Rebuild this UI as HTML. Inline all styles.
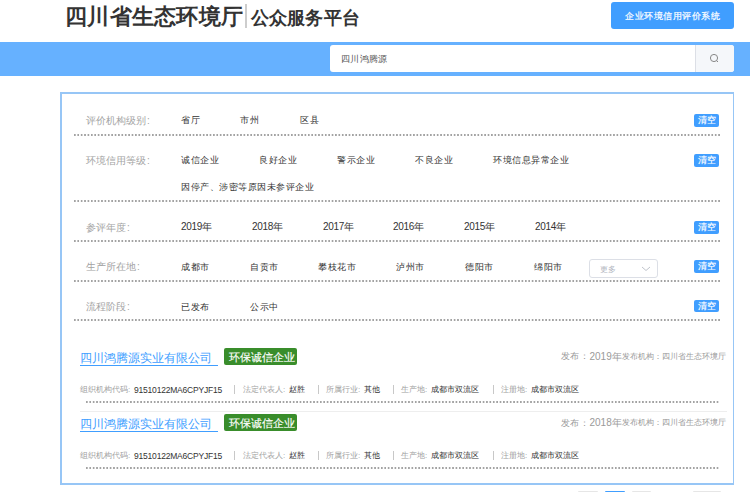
<!DOCTYPE html>
<html><head><meta charset="utf-8">
<style>
*{margin:0;padding:0;box-sizing:border-box}
html,body{width:750px;height:492px;overflow:hidden;background:#fff;font-family:"Liberation Sans",sans-serif;color:#333}
.a{position:absolute;white-space:nowrap}
.dot{height:2px;background-image:linear-gradient(to right,#a3a3a3 0,#a3a3a3 50%,transparent 50%);background-size:3.4px 2px}
.lab{font-size:10px;line-height:12px;color:#a3a3a3}
.it{font-size:9px;letter-spacing:0.5px;line-height:12px;color:#333}
.clr{width:25px;height:12.5px;background:#409eff;border-radius:2px;color:#fff;font-size:9px;letter-spacing:-0.5px;line-height:13px;text-align:center;-webkit-text-stroke:0.15px #fff}
.cname{font-size:12px;letter-spacing:0px;line-height:12.5px;color:#409eff;border-bottom:1px solid #409eff;padding-right:6px;padding-bottom:1px}
.badge{height:16.6px;width:73px;background:#398d2b;border-radius:2px;color:#fff;font-size:11px;line-height:19px;padding:0 0 0 4.6px;-webkit-text-stroke:0.15px #fff}
.pub{color:#9a9a9a}
.info{font-size:8px;line-height:10px;color:#a0a0a0}
.val{font-size:8px;line-height:10px;color:#333}
.code{font-size:8.5px;letter-spacing:-0.2px}
.yr{font-size:10px;letter-spacing:-0.35px}
.sep{font-size:8px;line-height:10px;color:#aaa}
</style></head><body>
<div class="a" style="left:65px;top:3.5px;font-size:22px;line-height:26px;letter-spacing:0.3px;font-weight:bold;color:#333">四川省生态环境厅</div>
<div class="a" style="left:245px;top:4px;width:2px;height:23.5px;background:#cdcdcd"></div>
<div class="a" style="left:250.5px;top:7px;font-size:18px;line-height:22px;letter-spacing:0.3px;font-weight:bold;color:#333">公众服务平台</div>
<div class="a" style="left:611.3px;top:2px;width:123px;height:26.8px;background:#409eff;border-radius:3px;color:#fff;font-size:9px;letter-spacing:0.5px;line-height:28px;text-align:center;-webkit-text-stroke:0.2px #fff">企业环境信用评价系统</div>
<div class="a" style="left:0;top:42px;width:750px;height:33.6px;background:#66b1ff"></div>
<div class="a" style="left:330px;top:45.2px;width:404px;height:26.6px;background:#fff;border-radius:3px"></div>
<div class="a" style="left:340.8px;top:53.2px;font-size:9px;letter-spacing:0.4px;line-height:12px;color:#555">四川鸿腾源</div>
<div class="a" style="left:695px;top:45.2px;width:39px;height:26.6px;background:#f5f7fa;border-left:1px solid #dcdfe6;border-radius:0 3px 3px 0"></div>
<svg class="a" style="left:709px;top:53px" width="11" height="11" viewBox="0 0 11 11"><circle cx="5" cy="5" r="3.6" fill="none" stroke="#888" stroke-width="1"/><line x1="7.6" y1="7.6" x2="9" y2="9" stroke="#888" stroke-width="1"/></svg>
<div class="a" style="left:60px;top:92px;width:674px;height:392.5px;border:2px solid #97c6f6;border-right-width:1px"></div>
<div class="a lab" style="left:86px;top:114.7px">评价机构级别<span style="margin-left:1px">:</span></div>
<div class="a it" style="left:181px;top:114px">省厅</div>
<div class="a it" style="left:240px;top:114px">市州</div>
<div class="a it" style="left:300px;top:114px">区县</div>
<div class="a clr" style="left:694px;top:114px">清空</div>
<div class="a dot" style="left:74px;top:133.5px;width:646px"></div>
<div class="a lab" style="left:86px;top:154.7px">环境信用等级<span style="margin-left:1px">:</span></div>
<div class="a it" style="left:181px;top:154px">诚信企业</div>
<div class="a it" style="left:259px;top:154px">良好企业</div>
<div class="a it" style="left:337px;top:154px">警示企业</div>
<div class="a it" style="left:415px;top:154px">不良企业</div>
<div class="a it" style="left:493px;top:154px">环境信息异常企业</div>
<div class="a clr" style="left:694px;top:154px">清空</div>
<div class="a dot" style="left:74px;top:200px;width:646px"></div>
<div class="a it" style="left:181px;top:181px">因停产、涉密等原因未参评企业</div>
<div class="a lab" style="left:86px;top:221.7px">参评年度<span style="margin-left:1px">:</span></div>
<div class="a it" style="left:181px;top:221px"><span class="yr">2019</span><span style="font-size:9.6px;letter-spacing:0">年</span></div>
<div class="a it" style="left:252px;top:221px"><span class="yr">2018</span><span style="font-size:9.6px;letter-spacing:0">年</span></div>
<div class="a it" style="left:323px;top:221px"><span class="yr">2017</span><span style="font-size:9.6px;letter-spacing:0">年</span></div>
<div class="a it" style="left:393px;top:221px"><span class="yr">2016</span><span style="font-size:9.6px;letter-spacing:0">年</span></div>
<div class="a it" style="left:464px;top:221px"><span class="yr">2015</span><span style="font-size:9.6px;letter-spacing:0">年</span></div>
<div class="a it" style="left:535px;top:221px"><span class="yr">2014</span><span style="font-size:9.6px;letter-spacing:0">年</span></div>
<div class="a clr" style="left:694px;top:221px">清空</div>
<div class="a dot" style="left:74px;top:240px;width:646px"></div>
<div class="a lab" style="left:86px;top:261.3px">生产所在地<span style="margin-left:1px">:</span></div>
<div class="a it" style="left:181px;top:260.6px">成都市</div>
<div class="a it" style="left:250px;top:260.6px">自贡市</div>
<div class="a it" style="left:318px;top:260.6px">攀枝花市</div>
<div class="a it" style="left:396px;top:260.6px">泸州市</div>
<div class="a it" style="left:465px;top:260.6px">德阳市</div>
<div class="a it" style="left:534px;top:260.6px">绵阳市</div>
<div class="a clr" style="left:694px;top:260px">清空</div>
<div class="a dot" style="left:74px;top:279.5px;width:646px"></div>
<div class="a" style="left:589px;top:259px;width:69px;height:19px;border:1px solid #dcdfe6;border-radius:3px"></div>
<div class="a" style="left:600px;top:263.6px;font-size:8px;letter-spacing:0.3px;line-height:12px;color:#b3b7bf">更多</div>
<svg class="a" style="left:641px;top:266px" width="10" height="6" viewBox="0 0 10 6"><polyline points="1,1 5,4.5 9,1" fill="none" stroke="#c0c4cc" stroke-width="1"/></svg>
<div class="a lab" style="left:86px;top:301.3px">流程阶段<span style="margin-left:1px">:</span></div>
<div class="a it" style="left:181px;top:300.6px">已发布</div>
<div class="a it" style="left:250px;top:300.6px">公示中</div>
<div class="a clr" style="left:694px;top:299.5px">清空</div>
<div class="a dot" style="left:74px;top:319px;width:646px"></div>
<div class="a cname" style="left:80px;top:351.5px">四川鸿腾源实业有限公司</div>
<div class="a badge" style="left:224px;top:348.3px">环保诚信企业</div>
<div class="a pub" style="left:561px;top:350.4px;font-size:9px;line-height:12px">发布</div>
<div class="a pub" style="left:580px;top:350.4px;font-size:9px;line-height:12px">：</div>
<div class="a pub" style="left:589.5px;top:350.8px;font-size:10px;line-height:12px">2019年</div>
<div class="a pub" style="left:621.5px;top:351.8px;font-size:8px;line-height:10px">发布机构</div>
<div class="a pub" style="left:654px;top:351.8px;font-size:8px;line-height:10px">：</div>
<div class="a pub" style="left:662px;top:351.8px;font-size:8px;line-height:10px">四川省生态环境厅</div>
<div class="a info" style="left:80px;top:384.5px">组织机构代码:</div>
<div class="a val code" style="left:134px;top:384.5px">91510122MA6CPYJF15</div>
<div class="a info" style="left:243px;top:384.5px">法定代表人:</div>
<div class="a val" style="left:289px;top:384.5px">赵胜</div>
<div class="a info" style="left:326px;top:384.5px">所属行业:</div>
<div class="a val" style="left:364px;top:384.5px">其他</div>
<div class="a info" style="left:401px;top:384.5px">生产地:</div>
<div class="a val" style="left:430.5px;top:384.5px">成都市双流区</div>
<div class="a info" style="left:501px;top:384.5px">注册地:</div>
<div class="a val" style="left:530.5px;top:384.5px">成都市双流区</div>
<div class="a" style="left:234px;top:384.5px;width:1px;height:9px;background:#c8c8c8"></div>
<div class="a" style="left:317.5px;top:384.5px;width:1px;height:9px;background:#c8c8c8"></div>
<div class="a" style="left:392.5px;top:384.5px;width:1px;height:9px;background:#c8c8c8"></div>
<div class="a" style="left:492.5px;top:384.5px;width:1px;height:9px;background:#c8c8c8"></div>
<div class="a dot" style="left:86px;top:400.6px;width:634px"></div>
<div class="a" style="left:80px;top:411px;width:647px;height:1px;background:#eee"></div>
<div class="a cname" style="left:80px;top:417.5px">四川鸿腾源实业有限公司</div>
<div class="a badge" style="left:224px;top:414.3px">环保诚信企业</div>
<div class="a pub" style="left:561px;top:416.79999999999995px;font-size:9px;line-height:12px">发布</div>
<div class="a pub" style="left:580px;top:416.79999999999995px;font-size:9px;line-height:12px">：</div>
<div class="a pub" style="left:589.5px;top:417.2px;font-size:10px;line-height:12px">2018年</div>
<div class="a pub" style="left:621.5px;top:418.2px;font-size:8px;line-height:10px">发布机构</div>
<div class="a pub" style="left:654px;top:418.2px;font-size:8px;line-height:10px">：</div>
<div class="a pub" style="left:662px;top:418.2px;font-size:8px;line-height:10px">四川省生态环境厅</div>
<div class="a info" style="left:80px;top:450.5px">组织机构代码:</div>
<div class="a val code" style="left:134px;top:450.5px">91510122MA6CPYJF15</div>
<div class="a info" style="left:243px;top:450.5px">法定代表人:</div>
<div class="a val" style="left:289px;top:450.5px">赵胜</div>
<div class="a info" style="left:326px;top:450.5px">所属行业:</div>
<div class="a val" style="left:364px;top:450.5px">其他</div>
<div class="a info" style="left:401px;top:450.5px">生产地:</div>
<div class="a val" style="left:430.5px;top:450.5px">成都市双流区</div>
<div class="a info" style="left:501px;top:450.5px">注册地:</div>
<div class="a val" style="left:530.5px;top:450.5px">成都市双流区</div>
<div class="a" style="left:234px;top:450.5px;width:1px;height:9px;background:#c8c8c8"></div>
<div class="a" style="left:317.5px;top:450.5px;width:1px;height:9px;background:#c8c8c8"></div>
<div class="a" style="left:392.5px;top:450.5px;width:1px;height:9px;background:#c8c8c8"></div>
<div class="a" style="left:492.5px;top:450.5px;width:1px;height:9px;background:#c8c8c8"></div>
<div class="a dot" style="left:86px;top:466.6px;width:634px"></div>
<div class="a" style="left:578px;top:491px;width:20px;height:1px;background:#e6e6e6;border-radius:2px 2px 0 0"></div>
<div class="a" style="left:605px;top:491px;width:19.5px;height:1px;background:#409eff;border-radius:2px 2px 0 0"></div>
<div class="a" style="left:632px;top:491px;width:19px;height:1px;background:#e6e6e6;border-radius:2px 2px 0 0"></div>
<div class="a" style="left:693px;top:491px;width:28px;height:1px;background:#e6e6e6;border-radius:2px 2px 0 0"></div>
</body></html>
